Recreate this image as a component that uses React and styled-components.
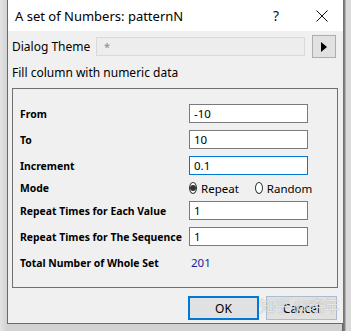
import styled, { createGlobalStyle } from 'styled-components';

const GlobalStyle = createGlobalStyle`
  html, body {
    margin: 0;
    padding: 0;
    background: #d6d6d6;
    font-family: "Noto Sans", "Liberation Sans", sans-serif;
  }
`

const Screen = styled.div`
  width: 351px;
  height: 331px;
  overflow: hidden;
  display: flex;
  background: linear-gradient(to right, #e4e4e4, #d2d2d2 7px, #d2d2d2 342px, #5c5c5c 342px, #8a8a8a 345px, #dadada 346px);
`

const Window = styled.div`
  margin-left: 7px;
  width: 335px;
  height: 323px;
  border-left: 1px solid #6b6b6b;
  border-bottom: 1px solid #6b6b6b;
  background: #f0f0f0;
  display: flex;
  flex-direction: column;
  position: relative;
`

const TitleBar = styled.div`
  height: 31px;
  background: #fff;
  display: flex;
  align-items: center;
  padding-left: 7px;
  font-size: 13px;
  color: #000;
`

const Title = styled.span`
  flex: 1;
`

const HelpMark = styled.span`
  width: 14px;
  margin-right: 32px;
  text-align: center;
  font-size: 14px;
  color: #111;
`

const CloseIcon = styled.span`
  width: 14px;
  margin-right: 14px;
  display: flex;
  align-items: center;
  justify-content: center;
`

const Body = styled.div`
  padding: 4px 3px 0 4px;
  display: flex;
  flex-direction: column;
  font-size: 12px;
`

const ThemeRow = styled.div`
  display: flex;
  align-items: center;
  height: 23px;
`

const ThemeLabel = styled.span`
  width: 84px;
`

const ThemeInput = styled.div`
  width: 209px;
  height: 19px;
  border: 1px solid #d9d9d9;
  background: #ededed;
  color: #888;
  font-size: 11px;
  padding-left: 7px;
  box-sizing: border-box;
  display: flex;
  align-items: center;
`

const ArrowButton = styled.div`
  margin-left: 7px;
  width: 24px;
  height: 23px;
  box-sizing: border-box;
  border: 1px solid #adadad;
  background: #e1e1e1;
  display: flex;
  align-items: center;
  justify-content: center;
`

const Caption = styled.div`
  margin-top: 6px;
  height: 17px;
  line-height: 17px;
`

const Group = styled.div`
  margin-top: 7px;
  width: 326px;
  height: 200px;
  box-sizing: border-box;
  border: 1px solid #707070;
  padding: 15px 0 0 7px;
  display: grid;
  grid-template-columns: 169px 119px;
  grid-template-rows: 19px 19px 19px 12px 19px 19px 19px;
  row-gap: 7px;
  align-items: center;
`

const Label = styled.div`
  font-weight: 700;
  font-size: 10.4px;
  white-space: nowrap;
`

const Field = styled.div`
  height: 19px;
  box-sizing: border-box;
  border: 1px solid ${p => (p.focused ? '#0078d7' : '#7a7a7a')};
  background: #fff;
  font-size: 11.5px;
  padding-left: 4px;
  display: flex;
  align-items: center;
`

const Value = styled.div`
  color: #2020a0;
  font-size: 11.5px;
  padding-left: 2px;
`

const RadioRow = styled.div`
  display: flex;
  align-items: center;
  gap: 4px;
  font-size: 11.5px;
  white-space: nowrap;
`

const Radio = styled.span`
  width: 12px;
  height: 12px;
  box-sizing: border-box;
  border-radius: 50%;
  border: 1px solid #333;
  background: #fff;
  display: flex;
  align-items: center;
  justify-content: center;
  margin-left: ${p => p.gap || 0}px;
  &::after {
    content: '';
    width: 6px;
    height: 6px;
    border-radius: 50%;
    background: ${p => (p.checked ? '#333' : 'transparent')};
  }
`

const Footer = styled.div`
  display: flex;
  justify-content: flex-end;
  gap: 7px;
  padding: 8px 3px 0 0;
`

const Button = styled.div`
  width: 71px;
  height: 24px;
  box-sizing: border-box;
  border: 1px solid ${p => (p.primary ? '#0078d7' : '#a9bdd0')};
  box-shadow: ${p => (p.primary ? 'inset 0 0 0 1px #0078d7' : 'none')};
  background: #e1e1e1;
  display: flex;
  align-items: center;
  justify-content: center;
  font-size: 12px;
`

const Watermark = styled.div`
  position: absolute;
  right: 4px;
  bottom: 6px;
  font-family: "Noto Sans CJK SC", sans-serif;
  font-size: 16px;
  color: rgba(255, 255, 255, 0.75);
  text-shadow: 0 0 1px rgba(90, 90, 90, 0.6);
  letter-spacing: -0.5px;
  pointer-events: none;
`

const rows = [
  ['From', '-10'],
  ['To', '10'],
  ['Increment', '0.1', true],
]

export default function App() {
  return (
    <Screen>
      <GlobalStyle />
      <Window>
        <TitleBar>
          <Title>A set of Numbers: patternN</Title>
          <HelpMark>?</HelpMark>
          <CloseIcon>
            <svg width="12" height="12" viewBox="0 0 12 12">
              <path d="M0.5 0.5 L11.5 11.5 M11.5 0.5 L0.5 11.5" stroke="#111" strokeWidth="1" fill="none" />
            </svg>
          </CloseIcon>
        </TitleBar>
        <Body>
          <ThemeRow>
            <ThemeLabel>Dialog Theme</ThemeLabel>
            <ThemeInput>*</ThemeInput>
            <ArrowButton>
              <svg width="8" height="10" viewBox="0 0 8 10">
                <path d="M1 0 L7 5 L1 10 Z" fill="#000" />
              </svg>
            </ArrowButton>
          </ThemeRow>
          <Caption>Fill column with numeric data</Caption>
          <Group>
            {rows.map(([label, value, focused]) => (
              <>
                <Label key={label}>{label}</Label>
                <Field key={label + 'f'} focused={focused}>{value}</Field>
              </>
            ))}
            <Label>Mode</Label>
            <RadioRow>
              <Radio checked />Repeat
              <Radio gap={12} />Random
            </RadioRow>
            <Label>Repeat Times for Each Value</Label>
            <Field>1</Field>
            <Label>Repeat Times for The Sequence</Label>
            <Field>1</Field>
            <Label>Total Number of Whole Set</Label>
            <Value>201</Value>
          </Group>
          <Footer>
            <Button primary>OK</Button>
            <Button>Cancel</Button>
          </Footer>
        </Body>
        <Watermark>知乎 @晓年</Watermark>
      </Window>
    </Screen>
  )
}
